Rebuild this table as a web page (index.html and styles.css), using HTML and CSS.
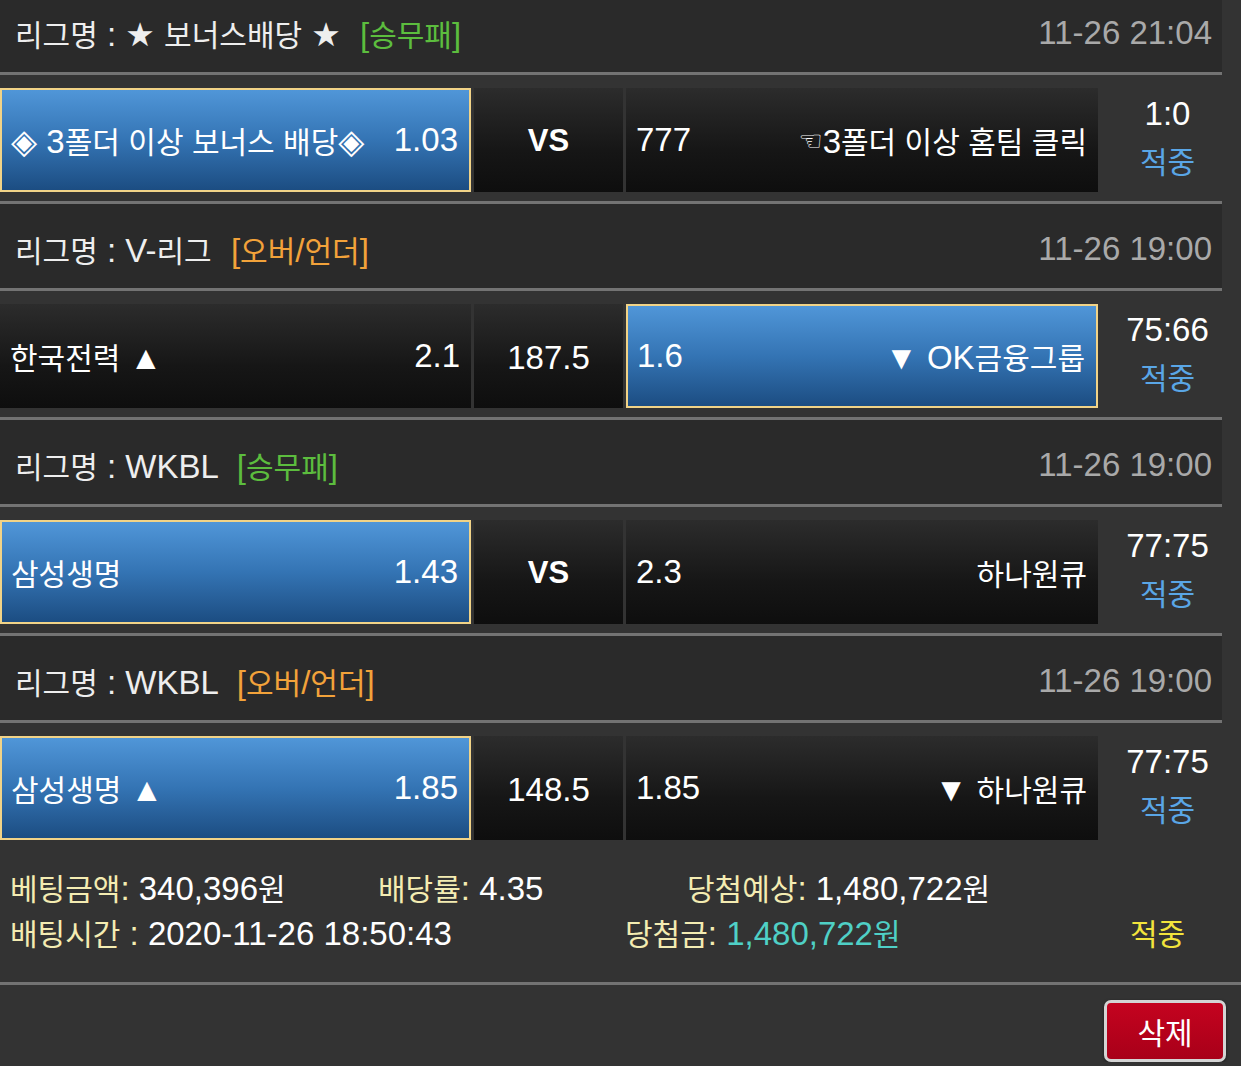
FILE: index.html
```html
<!DOCTYPE html>
<html lang="ko">
<head>
  <meta charset="UTF-8" />
  <meta name="viewport" content="width=device-width, initial-scale=1.0"/>
  <title>배팅내역</title>
  <link rel="stylesheet" href="styles.css">
</head>
<body>
  <div class="slip">
    <div class="game">
      <div class="game-head">
        <div class="league"><span class="k">리그명</span> : ★ <span class="k">보너스배당</span> ★ <span class="tag tag-win">[<span class="k">승무패</span>]</span></div>
        <div class="game-time">11-26 21:04</div>
      </div>
      <div class="game-row">
        <div class="pick on">
          <span class="team"><span class="diamond">◈</span> 3<span class="k">폴더 이상 보너스 배당</span><span class="diamond">◈</span></span>
          <span class="odds">1.03</span>
        </div>
        <div class="pick pick-mid vs">VS</div>
        <div class="pick">
          <span class="odds">777</span>
          <span class="team"><span class="hand">☜</span>3<span class="k">폴더 이상 홈팀 클릭</span></span>
        </div>
        <div class="result">
          <span class="score">1:0</span>
          <span class="hit k">적중</span>
        </div>
      </div>
    </div>

    <div class="game">
      <div class="game-head">
        <div class="league"><span class="k">리그명</span> : V-<span class="k">리그</span> <span class="tag tag-ou">[<span class="k">오버</span>/<span class="k">언더</span>]</span></div>
        <div class="game-time">11-26 19:00</div>
      </div>
      <div class="game-row">
        <div class="pick">
          <span class="team"><span class="k">한국전력</span> ▲</span>
          <span class="odds">2.1</span>
        </div>
        <div class="pick pick-mid">187.5</div>
        <div class="pick on">
          <span class="odds">1.6</span>
          <span class="team">▼ OK<span class="k">금융그룹</span></span>
        </div>
        <div class="result">
          <span class="score">75:66</span>
          <span class="hit k">적중</span>
        </div>
      </div>
    </div>

    <div class="game">
      <div class="game-head">
        <div class="league"><span class="k">리그명</span> : WKBL <span class="tag tag-win">[<span class="k">승무패</span>]</span></div>
        <div class="game-time">11-26 19:00</div>
      </div>
      <div class="game-row">
        <div class="pick on">
          <span class="team k">삼성생명</span>
          <span class="odds">1.43</span>
        </div>
        <div class="pick pick-mid vs">VS</div>
        <div class="pick">
          <span class="odds">2.3</span>
          <span class="team k">하나원큐</span>
        </div>
        <div class="result">
          <span class="score">77:75</span>
          <span class="hit k">적중</span>
        </div>
      </div>
    </div>

    <div class="game">
      <div class="game-head">
        <div class="league"><span class="k">리그명</span> : WKBL <span class="tag tag-ou">[<span class="k">오버</span>/<span class="k">언더</span>]</span></div>
        <div class="game-time">11-26 19:00</div>
      </div>
      <div class="game-row">
        <div class="pick on">
          <span class="team"><span class="k">삼성생명</span> ▲</span>
          <span class="odds">1.85</span>
        </div>
        <div class="pick pick-mid">148.5</div>
        <div class="pick">
          <span class="odds">1.85</span>
          <span class="team">▼ <span class="k">하나원큐</span></span>
        </div>
        <div class="result">
          <span class="score">77:75</span>
          <span class="hit k">적중</span>
        </div>
      </div>
    </div>
  </div>

  <div class="summary">
    <div class="summary-line line-1">
      <span class="item"><span class="label k">베팅금액</span><span class="label">:</span> 340,396<span class="k">원</span></span>
      <span class="item"><span class="label k">배당률</span><span class="label">:</span> 4.35</span>
      <span class="item"><span class="label k">당첨예상</span><span class="label">:</span> 1,480,722<span class="k">원</span></span>
    </div>
    <div class="summary-line line-2">
      <span class="item"><span class="label k">배팅시간</span><span class="label"> :</span> 2020-11-26 18:50:43</span>
      <span class="item"><span class="label k">당첨금</span><span class="label">:</span> <span class="win">1,480,722<span class="k">원</span></span></span>
      <span class="item status k">적중</span>
    </div>
  </div>

  <div class="actions">
    <button class="btn-delete"><span class="k">삭제</span></button>
  </div>
</body>
</html>
```

FILE: styles.css
```css
* {
  margin: 0;
  padding: 0;
  box-sizing: border-box;
}

body {
  font-family: 'Liberation Sans', 'DejaVu Sans', 'Noto Sans CJK KR', sans-serif;
  font-size: 33px;
  background: #333333;
  color: #ffffff;
  overflow: hidden;
}

/* Hangul runs: the CJK face is wide, so it gets a smaller size */
.k {
  font-family: 'Noto Sans CJK KR', sans-serif;
  font-size: 30px;
}

.slip {
  width: 1222px;
  margin-top: -12px;
}

.game-head {
  height: 87px;
  padding: 6px 10px 0 15px;
  background: #2a2a2a;
  border-bottom: 3px solid #737373;
  display: flex;
  align-items: center;
  justify-content: space-between;
  color: #eeeeee;
}

.tag {
  margin-left: 10px;
}

.tag-win { color: #5cbd3e; }
.tag-ou { color: #f2a23a; }

.game-time {
  color: #a9a9a9;
}

.game-row {
  height: 129px;
  padding: 13px 0 12px;
  background: #333333;
  border-bottom: 3px solid #737373;
  display: flex;
  gap: 3px;
}

.game:last-child .game-row {
  height: 127px;
  border-bottom: 0;
}

.pick {
  width: 472px;
  height: 104px;
  flex-shrink: 0;
  padding: 0 11px 0 10px;
  display: flex;
  align-items: center;
  justify-content: space-between;
  background: linear-gradient(180deg, #2c2c2c 0%, #161616 60%, #0e0e0e 100%);
  white-space: nowrap;
}

.pick:first-child {
  width: 471px;
}

.pick.on {
  background: linear-gradient(180deg, #5096d8 0%, #3474b4 50%, #1c4d82 100%);
  border: 2px solid #f1d387;
  padding: 0 11px 0 9px;
}

.pick-mid {
  width: 149px;
  justify-content: center;
  padding: 4px 0 0;
}

.vs {
  font-weight: 700;
  font-size: 31px;
  padding-top: 2px;
}

.diamond {
  font-family: 'DejaVu Sans', sans-serif;
  font-size: 34px;
  line-height: 1;
}

.hand {
  font-size: 27px;
  vertical-align: 3px;
}

.result {
  width: 121px;
  flex-shrink: 0;
  padding: 0 0 4px 12px;
  display: flex;
  flex-direction: column;
  align-items: center;
  justify-content: center;
  line-height: 46px;
}

.hit {
  color: #5aa6e6;
}

.summary {
  height: 135px;
  padding: 14px 0 0 10px;
  border-bottom: 3px solid #737373;
}

.summary-line {
  display: flex;
  height: 45px;
  align-items: center;
  white-space: nowrap;
}

.line-1 .item:nth-child(1) { width: 368px; }
.line-1 .item:nth-child(2) { width: 309px; }
.line-2 .item:nth-child(1) { width: 615px; }
.line-2 .item:nth-child(2) { width: 505px; }

.label {
  color: #f4ecb2;
}

.win {
  color: #4fd0c6;
}

.status {
  color: #f2e43c;
}

.actions {
  display: flex;
  justify-content: flex-end;
  padding: 15px 15px 0 0;
}

.btn-delete {
  width: 122px;
  height: 62px;
  background: linear-gradient(180deg, #c4031f 0%, #a80019 100%);
  border: 3px solid #d4d4d4;
  border-radius: 7px;
  color: #ffffff;
  box-shadow: 0 1px 3px rgba(0, 0, 0, 0.5);
}

.btn-delete .k {
  font-size: 30px;
}
```
